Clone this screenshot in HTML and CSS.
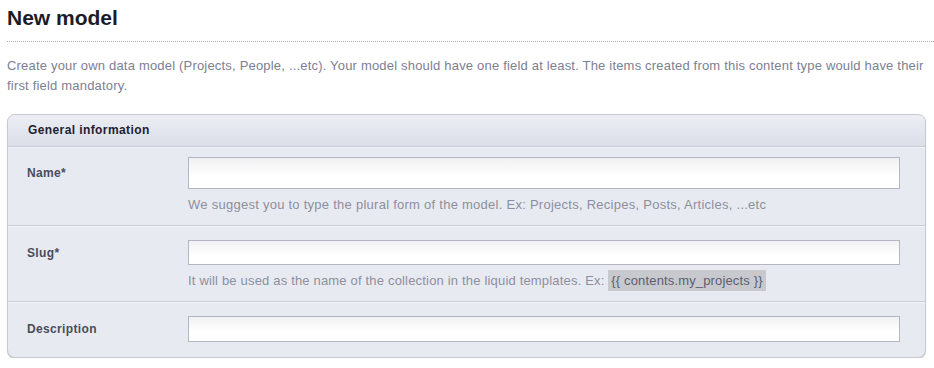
FILE: index.html
```html
<!DOCTYPE html>
<html lang="en">

<head>
    <meta charset="UTF-8">
    <meta name="viewport" content="width=device-width, initial-scale=1.0">
    <title>New model</title>
    <link rel="stylesheet" href="styles.css">
</head>

<body>
    <h1 class="page-title">New model</h1>

    <p class="intro">Create your own data model (Projects, People, ...etc). Your model should have one field at least. The items created from this content type would have their first field mandatory.</p>

    <div class="panel">
        <div class="panel-header">General information</div>

        <div class="field-row name-row">
            <label for="name">Name*</label>
            <input type="text" id="name" class="input-large">
            <p class="hint">We suggest you to type the plural form of the model. Ex: Projects, Recipes, Posts, Articles, ...etc</p>
        </div>

        <div class="field-row slug-row">
            <label for="slug">Slug*</label>
            <input type="text" id="slug">
            <p class="hint slug-hint">It will be used as the name of the collection in the liquid templates. Ex: <code>{{ contents.my_projects }}</code></p>
        </div>

        <div class="field-row description-row">
            <label for="description">Description</label>
            <input type="text" id="description">
        </div>
    </div>
</body>

</html>
```

FILE: styles.css
```css
body {
    font-family: "Liberation Sans", Arial, sans-serif;
    margin: 0;
    padding: 0 8px 0 7px;
    background: white;
}

.page-title {
    font-size: 21px;
    font-weight: bold;
    color: #1c1c28;
    margin: 0 -8px 0 0;
    padding: 5px 0 11px;
    line-height: 25px;
    border-bottom: 1px dotted #a9a9b0;
}

.intro {
    font-size: 13px;
    letter-spacing: 0.19px;
    line-height: 20px;
    color: #7d8093;
    margin: 14px 0 18px;
}

.panel {
    background-color: #e8eaf2;
    border: 1px solid #c6c8d3;
    border-radius: 8px;
    box-shadow: 0 1px 1px rgba(0, 0, 0, 0.2);
    overflow: hidden;
}

.panel-header {
    font-size: 12px;
    font-weight: bold;
    letter-spacing: 0.4px;
    color: #1f2030;
    line-height: 31px;
    padding-left: 20px;
    background: linear-gradient(#eceef4, #dcdee8);
    border-bottom: 1px solid #c8cad5;
}

.field-row {
    display: grid;
    grid-template-columns: 180px 712px;
    padding: 13px 0 10px;
    border-top: 1px solid #f4f5f9;
    border-bottom: 1px solid #c8cad5;
}

.field-row:last-child {
    border-bottom: none;
}

.name-row {
    padding-top: 9px;
}

.description-row {
    padding-bottom: 15px;
}

label {
    grid-column: 1;
    grid-row: 1;
    align-self: center;
    padding-left: 19px;
    font-size: 12px;
    font-weight: bold;
    letter-spacing: 0.35px;
    color: #4a4c5b;
}

input[type="text"] {
    grid-column: 2;
    grid-row: 1;
    height: 25px;
    box-sizing: border-box;
    margin: 0;
    border: 1px solid #b4b6c2;
    background: linear-gradient(#f1f1f3, #ffffff 60%);
    font-family: inherit;
}

input.input-large {
    height: 32px;
}

#description {
    height: 26px;
}

.hint {
    grid-column: 2;
    grid-row: 2;
    margin: 5px 0 0;
    font-size: 13px;
    letter-spacing: 0.26px;
    line-height: 21px;
    color: #8d8f9d;
}

.slug-hint {
    letter-spacing: 0.18px;
}

.hint code {
    font-family: inherit;
    letter-spacing: 0.15px;
    background-color: #c8c9cf;
    color: #5c5e6c;
    padding: 3px 3px;
}
```
